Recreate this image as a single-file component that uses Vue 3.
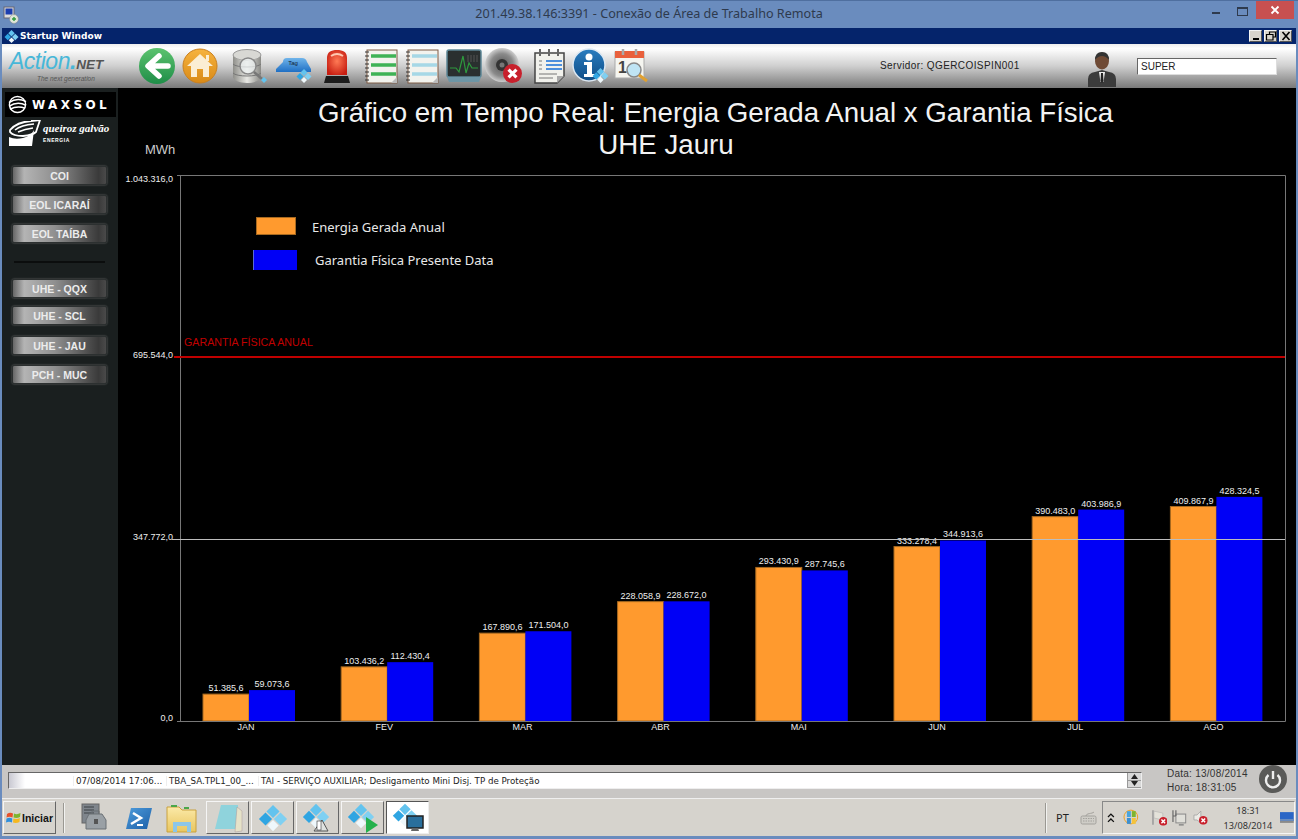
<script setup>
const MAX = 1043316
const BASE = 721
const HEIGHT = 546

const months = [
    { name: 'JAN', gerada: 51385.6, garantia: 59073.6, geradaText: '51.385,6', garantiaText: '59.073,6' },
    { name: 'FEV', gerada: 103436.2, garantia: 112430.4, geradaText: '103.436,2', garantiaText: '112.430,4' },
    { name: 'MAR', gerada: 167890.6, garantia: 171504.0, geradaText: '167.890,6', garantiaText: '171.504,0' },
    { name: 'ABR', gerada: 228058.9, garantia: 228672.0, geradaText: '228.058,9', garantiaText: '228.672,0' },
    { name: 'MAI', gerada: 293430.9, garantia: 287745.6, geradaText: '293.430,9', garantiaText: '287.745,6' },
    { name: 'JUN', gerada: 333278.4, garantia: 344913.6, geradaText: '333.278,4', garantiaText: '344.913,6' },
    { name: 'JUL', gerada: 390483.0, garantia: 403986.9, geradaText: '390.483,0', garantiaText: '403.986,9' },
    { name: 'AGO', gerada: 409867.9, garantia: 428324.5, geradaText: '409.867,9', garantiaText: '428.324,5' }
]

const scale = (v) => (v / MAX) * HEIGHT
const barX = (i) => 203 + i * 138.2

const yLabels = [
    { text: '1.043.316,0', y: 182 },
    { text: '695.544,0', y: 358 },
    { text: '347.772,0', y: 540 },
    { text: '0,0', y: 721 }
]

const sideTop = ['COI', 'EOL ICARAÍ', 'EOL TAÍBA']
const sideBottom = [
    { name: 'UHE - QQX', cls: '' },
    { name: 'UHE - SCL', cls: 'tight' },
    { name: 'UHE - JAU', cls: 'loose' },
    { name: 'PCH - MUC', cls: '' }
]
</script>

<template>
    <div class="desktop">
        <svg class="defs" width="0" height="0">
            <defs>
                <linearGradient id="gGreen" x1="0" y1="0" x2="0" y2="1"><stop offset="0" stop-color="#5cc36f" /><stop offset="1" stop-color="#1f8d48" /></linearGradient>
                <linearGradient id="gOrange" x1="0" y1="0" x2="0" y2="1"><stop offset="0" stop-color="#f6b33f" /><stop offset="1" stop-color="#d98a17" /></linearGradient>
                <linearGradient id="gMetal" x1="0" y1="0" x2="1" y2="0"><stop offset="0" stop-color="#8f8f8a" /><stop offset=".5" stop-color="#e8e8e4" /><stop offset="1" stop-color="#8a8a86" /></linearGradient>
                <linearGradient id="gTag" x1="0" y1="0" x2="0" y2="1"><stop offset="0" stop-color="#6fb4ea" /><stop offset="1" stop-color="#1f6fc4" /></linearGradient>
                <radialGradient id="gSiren" cx=".5" cy=".45" r=".6"><stop offset="0" stop-color="#ff7a55" /><stop offset="1" stop-color="#c81e12" /></radialGradient>
                <radialGradient id="gSpeaker" cx=".5" cy=".5" r=".55"><stop offset="0" stop-color="#555" /><stop offset=".6" stop-color="#8a8a8a" /><stop offset="1" stop-color="#e2e2e2" /></radialGradient>
                <linearGradient id="gInfo" x1="0" y1="0" x2="0" y2="1"><stop offset="0" stop-color="#2a7dbf" /><stop offset="1" stop-color="#0f4d86" /></linearGradient>
                <linearGradient id="gFolder" x1="0" y1="0" x2="0" y2="1"><stop offset="0" stop-color="#fbe9a8" /><stop offset="1" stop-color="#e9c65f" /></linearGradient>
                <linearGradient id="gPs" x1="0" y1="0" x2="1" y2="1"><stop offset="0" stop-color="#4f9cdb" /><stop offset="1" stop-color="#1b5fa8" /></linearGradient>
                <symbol id="diamond" viewBox="0 0 32 32">
                    <path d="M16 2 23 9 16 16 9 9Z" fill="#63c3ee" />
                    <path d="M8 10 15 17 8 24 1 17Z" fill="#2fa5e2" />
                    <path d="M24 10 31 17 24 24 17 17Z" fill="#7fd0f2" />
                    <path d="M16 18 22 24 16 30 10 24Z" fill="#eef7fb" />
                </symbol>
                <symbol id="badX" viewBox="0 0 12 12">
                    <circle cx="6" cy="6" r="6" fill="#c8202c" />
                    <path d="M3.5 3.5 8.5 8.5M8.5 3.5 3.5 8.5" stroke="#fff" stroke-width="2" />
                </symbol>
            </defs>
        </svg>

        <header class="rdp-bar">
            <svg class="rdp-icon" width="16" height="18" viewBox="0 0 16 18">
                <rect x="1" y="1" width="10" height="11" fill="#ddd" stroke="#667" />
                <rect x="2.5" y="2.5" width="7" height="6" fill="#1d3fb0" />
                <circle cx="11" cy="13" r="4.4" fill="#dfe6d8" stroke="#888" stroke-width=".5" />
                <path d="M9 13h4M11 11v4" stroke="#2f9a3d" stroke-width="1.4" />
            </svg>
            <span class="rdp-title">201.49.38.146:3391 - Conexão de Área de Trabalho Remota</span>
            <div class="rdp-controls">
                <span class="rdp-min"></span>
                <span class="rdp-max"></span>
                <span class="rdp-close">
                    <svg width="10" height="10" viewBox="0 0 10 10"><path d="M1.5 1.5 8.5 8.5M8.5 1.5 1.5 8.5" stroke="#fff" stroke-width="1.8" /></svg>
                </span>
            </div>
        </header>

        <div class="window">
            <div class="win-title">
                <svg width="15" height="15" viewBox="0 0 32 32"><use href="#diamond" /></svg>
                <span>Startup Window</span>
                <div class="win-controls">
                    <span class="win-btn"><svg width="12" height="10" viewBox="0 0 12 10"><rect x="3" y="7" width="6" height="2" fill="#000" /></svg></span>
                    <span class="win-btn"><svg width="12" height="10" viewBox="0 0 12 10"><path d="M4.500 3V1h6v5H8M1.500 3.500h6.500v5.500h-6.500z" fill="none" stroke="#000" stroke-width="1.200" /></svg></span>
                    <span class="win-btn"><svg width="12" height="10" viewBox="0 0 12 10"><path d="M2.500 1 9.500 9M9.500 1 2.500 9" stroke="#000" stroke-width="1.600" /></svg></span>
                </div>
            </div>

            <div class="toolbar">
                <div class="logo">
                    <div class="logo-main"><span class="logo-action">Action</span><span class="logo-dot">.</span><span class="logo-net">NET</span></div>
                    <div class="logo-sub">The next generation</div>
                </div>
                <div class="tools">
                    <svg class="tool" width="36" height="36" viewBox="0 0 36 36">
                        <circle cx="18" cy="18" r="18" fill="url(#gGreen)" />
                        <path d="M20 8 9 18 20 28M10 18H29" fill="none" stroke="#fff" stroke-width="5.500" stroke-linejoin="round" stroke-linecap="round" />
                    </svg>
                    <svg class="tool g7" width="36" height="36" viewBox="0 0 36 36">
                        <circle cx="18" cy="18" r="17" fill="url(#gOrange)" stroke="#c9801f" />
                        <path d="M24 7H27V13H24Z" fill="#fbeed4" />
                        <path d="M18 6 31 18H27V29H21V21H15V29H9V18H5Z" fill="#fbeed4" />
                    </svg>
                    <svg class="tool g12" width="36" height="36" viewBox="0 0 36 36">
                        <g transform="translate(2 0)">
                            <ellipse cx="15" cy="7" rx="14" ry="5.500" fill="#d8d8d4" stroke="#999" />
                            <path d="M1 7V29C1 32 8 35 15 35S29 32 29 29V7C29 10 22 12.500 15 12.500S1 10 1 7Z" fill="url(#gMetal)" />
                            <path d="M1 16C4 20 26 20 29 16M1 25C4 29 26 29 29 25" fill="none" stroke="#777" />
                            <circle cx="16" cy="18" r="8" fill="#eef2f2" fill-opacity=".75" stroke="#888" stroke-width="1.500" />
                            <path d="M22 24 30 31" stroke="#777" stroke-width="2.500" />
                            <path d="M32 29 35 32 32 35 29 32Z" fill="#63c3ee" />
                        </g>
                    </svg>
                    <svg class="tool g10" width="36" height="36" viewBox="0 0 36 36">
                        <path d="M7 14Q7 10 11 10H26Q30 10 31 14L35 21V24H0V21Z" fill="url(#gTag)" />
                        <text x="17" y="17" class="tag-text">Tag</text>
                        <svg x="20" y="20" width="16" height="16" viewBox="0 0 32 32"><use href="#diamond" /></svg>
                    </svg>
                    <svg class="tool g7" width="36" height="36" viewBox="0 0 36 36">
                        <path d="M8 27V10C8 4 12 2 18 2S28 4 28 10V27Z" fill="url(#gSiren)" />
                        <path d="M12 8Q18 4 24 8" fill="none" stroke="#ffc7b0" stroke-width="2" />
                        <path d="M7 28H29L31 35H5Z" fill="#1c1c1c" />
                    </svg>
                    <svg class="tool g9" width="36" height="36" viewBox="0 0 36 36">
                        <rect x="3" y="2" width="30" height="33" fill="#f3f3ee" stroke="#7d5a45" />
                        <path d="M7 8H32M7 17H32M7 26H32" stroke="#3fb356" stroke-width="3.500" />
                        <path d="M1 4h4M1 8h4M1 12h4M1 16h4M1 20h4M1 24h4M1 28h4M1 32h4" stroke="#333" />
                        <path d="M27 35 33 29V35Z" fill="#bbb" />
                    </svg>
                    <svg class="tool g5" width="36" height="36" viewBox="0 0 36 36">
                        <rect x="3" y="2" width="30" height="33" fill="#f3f3ee" stroke="#7d5a45" />
                        <path d="M7 8H32M7 17H32M7 26H32" stroke="#a6d8e6" stroke-width="3.500" />
                        <path d="M1 4h4M1 8h4M1 12h4M1 16h4M1 20h4M1 24h4M1 28h4M1 32h4" stroke="#333" />
                        <path d="M27 35 33 29V35Z" fill="#bbb" />
                    </svg>
                    <svg class="tool g5" width="36" height="36" viewBox="0 0 36 36">
                        <rect x="1" y="2" width="34" height="27" rx="2" fill="#2a2f2f" stroke="#5d8796" stroke-width="1.500" />
                        <path d="M1 29H35L33 34H3Z" fill="#6d95a5" />
                        <path d="M4 20H10L13 24 17 8 20 25 23 15 26 20H32" fill="none" stroke="#2e9a3e" stroke-width="1.200" />
                        <path d="M22 7V14M25 7V14M28 7V14M31 7V14" stroke="#555" />
                    </svg>
                    <svg class="tool g3" width="36" height="36" viewBox="0 0 36 36">
                        <circle cx="17" cy="17" r="17" fill="url(#gSpeaker)" />
                        <circle cx="17" cy="17" r="6" fill="#333" />
                        <circle cx="17" cy="17" r="2.500" fill="#777" />
                        <svg x="18" y="16" width="19" height="19" viewBox="0 0 12 12"><use href="#badX" /></svg>
                    </svg>
                    <svg class="tool g10" width="36" height="36" viewBox="0 0 36 36">
                        <path d="M4 5H33V28L26 35H4Z" fill="#f1f1ec" stroke="#444" stroke-width="1.500" />
                        <path d="M9 1V8M18 1V8M27 1V8" stroke="#666" stroke-width="2" />
                        <path d="M15 13H31M15 17H31M15 21H31" stroke="#4d8fdc" stroke-width="2" />
                        <path d="M8 13H11M8 17H11M8 21H11M8 26H26M8 30H22" stroke="#777" />
                        <path d="M26 35V28H33Z" fill="#aaa" />
                    </svg>
                    <svg class="tool g5" width="36" height="36" viewBox="0 0 36 36">
                        <circle cx="17" cy="17" r="16" fill="url(#gInfo)" stroke="#dde8f2" stroke-width="1.500" />
                        <circle cx="17" cy="9" r="3.500" fill="#fff" />
                        <path d="M12 14H20V26H23V29H12V26H15V17H12Z" fill="#fff" />
                        <svg x="20" y="19" width="17" height="17" viewBox="0 0 32 32"><use href="#diamond" /></svg>
                    </svg>
                    <svg class="tool g6" width="36" height="36" viewBox="0 0 36 36">
                        <rect x="1" y="4" width="29" height="26" fill="#f5f5f0" stroke="#aaa" />
                        <rect x="1" y="3" width="29" height="7" fill="#e9603c" />
                        <path d="M9 1V7M22 1V7" stroke="#aaa" stroke-width="2.500" />
                        <text x="4" y="25" class="cal-text">1</text>
                        <circle cx="20" cy="22" r="7" fill="#bfe4f4" stroke="#888" stroke-width="1.500" />
                        <path d="M25 27 33 33" stroke="#e0a030" stroke-width="3" />
                    </svg>
                </div>
                <span class="server">Servidor: QGERCOISPIN001</span>
                <svg class="user" width="28" height="35" viewBox="0 0 28 35">
                    <path d="M0 35V27Q0 21 7 20L14 18 21 20Q28 21 28 27V35Z" fill="#3b3b3b" />
                    <path d="M11 20H17L15.500 30H12.500Z" fill="#eee" />
                    <path d="M13 21H15L15.500 29 14 31 12.500 29Z" fill="#222" />
                    <ellipse cx="14" cy="9" rx="7" ry="8.500" fill="#6f4a35" />
                    <path d="M7 8Q7 0 14 0T21 8Q18 4 14 4T7 8Z" fill="#333" />
                </svg>
                <div class="user-box">SUPER</div>
            </div>

            <div class="main">
                <aside class="side">
                    <div class="waxsol">
                        <svg width="19" height="19" viewBox="0 0 20 20">
                            <circle cx="10" cy="10" r="8.500" fill="none" stroke="#fff" stroke-width="1.500" />
                            <path d="M1 8Q10 2 19 7M1 12Q10 6 19 11M2 15Q10 11 18 14" fill="none" stroke="#fff" stroke-width="1.600" />
                        </svg>
                        <span>WAXSOL</span>
                    </div>
                    <div class="queiroz">
                        <svg width="32" height="26" viewBox="0 0 32 26">
                            <path d="M0 26V17Q6 20 14 18T25 10L23 26Z" fill="#fff" />
                            <path d="M1 10Q8 2 22 1L31 0 27 12Q24 15 14 16 4 16 1 12Z" fill="none" stroke="#fff" stroke-width="1.800" />
                            <path d="M6 10Q12 5 25 4M9 12Q16 9 24 8" fill="none" stroke="#fff" stroke-width="1.600" />
                        </svg>
                        <div class="q-text">
                            <div class="q-name">queiroz galvão</div>
                            <div class="q-sub">ENERGIA</div>
                        </div>
                    </div>
                    <div class="side-list">
                        <button v-for="b in sideTop" :key="b" class="side-btn">{{ b }}</button>
                        <div class="side-divider"></div>
                        <button v-for="b in sideBottom" :key="b.name" class="side-btn" :class="b.cls">{{ b.name }}</button>
                    </div>
                </aside>

                <svg class="chart" width="1178" height="677" viewBox="118 88 1178 677">
                    <text x="715.500" y="122" class="title">Gráfico em Tempo Real: Energia Gerada Anual x Garantia Física</text>
                    <text x="666" y="154" class="title">UHE Jauru</text>
                    <text x="145" y="154" class="unit">MWh</text>

                    <text x="184" y="346" class="limit">GARANTIA FÍSICA ANUAL</text>

                    <text v-for="l in yLabels" :key="l.text" x="173" :y="l.y" class="axis end">{{ l.text }}</text>

                    <rect x="256.500" y="217.500" width="39" height="17" fill="#ff9a2e" stroke="#a86a20" />
                    <rect x="253" y="250" width="44" height="20" fill="#0000f6" />
                    <rect x="253" y="250" width="1" height="20" fill="#5a6ad8" />
                    <text x="312" y="232" class="legend">Energia Gerada Anual</text>
                    <text x="315" y="265" class="legend">Garantia Física Presente Data</text>

                    <g v-for="(m, i) in months" :key="m.name">
                        <rect :x="barX(i)" :y="BASE - scale(m.gerada)" width="46" :height="scale(m.gerada)" fill="#ff9a2e" stroke="#a86a20" />
                        <rect :x="barX(i) + 46" :y="BASE - scale(m.garantia)" width="46" :height="scale(m.garantia)" fill="#0000f6" />
                        <text :x="barX(i) + 23" :y="BASE - scale(m.gerada) - 3" class="axis mid">{{ m.geradaText }}</text>
                        <text :x="barX(i) + 69" :y="BASE - scale(m.garantia) - 3" class="axis mid">{{ m.garantiaText }}</text>
                        <text :x="barX(i) + 43" y="730" class="axis mid">{{ m.name }}</text>
                    </g>

                    <path d="M177 175.500H1285.500V721.500H177M180.500 175V721" fill="none" stroke="#777" />
                    <path d="M172 539.500H1285" stroke="#bdbdbd" />
                    <path d="M174 357H1285" stroke="#c00000" stroke-width="2" />
                </svg>
            </div>

            <div class="status">
                <div class="alarm-list">
                    <span class="cell-first"></span>
                    <span class="cell cell-date">07/08/2014 17:06...</span>
                    <span class="cell cell-tag">TBA_SA.TPL1_00_...</span>
                    <span class="cell">TAI - SERVIÇO AUXILIAR; Desligamento Mini Disj. TP de Proteção</span>
                    <div class="scroll">
                        <span class="scroll-btn"><svg width="9" height="5" viewBox="0 0 9 5"><path d="M4.500 0 8 5H1Z" fill="#222" /></svg></span>
                        <span class="scroll-btn"><svg width="9" height="5" viewBox="0 0 9 5"><path d="M1 0H8L4.500 5Z" fill="#222" /></svg></span>
                    </div>
                </div>
                <div class="clock-block">
                    <div>Data: 13/08/2014</div>
                    <div>Hora: 18:31:05</div>
                </div>
                <svg class="power" width="28" height="28" viewBox="0 0 28 28">
                    <circle cx="14" cy="14" r="14" fill="#5a5a58" />
                    <path d="M9.500 10A7 7 0 1 0 18.500 10" fill="none" stroke="#eee" stroke-width="2.400" />
                    <path d="M14 6V14" stroke="#eee" stroke-width="2.400" />
                </svg>
            </div>

            <div class="taskbar">
                <button class="start">
                    <svg width="15" height="14" viewBox="0 0 15 14">
                        <path d="M1 3Q4 1 7 2.500L6.500 6.500Q3.500 5 .5 6.500Z" fill="#e8502a" />
                        <path d="M8 2.500Q11 4 14.500 2L14 6Q11 7.500 7.500 6.500Z" fill="#7fb52c" />
                        <path d="M.5 7.500Q3.500 6 6.300 7.500L6 11.500Q3 10 0 11.500Z" fill="#2f8fdc" />
                        <path d="M7.400 7.500Q11 8.500 13.800 7L13.500 11Q10 12.500 7 11.500Z" fill="#f5b81f" />
                    </svg>
                    <span>Iniciar</span>
                </button>
                <span class="task-sep"></span>
                <svg class="task-icon first" width="36" height="34" viewBox="0 0 36 34">
                    <rect x="8" y="3" width="17" height="19" fill="#7f858c" stroke="#666" />
                    <path d="M10 6H20M10 9H20M10 12H20" stroke="#3c4044" />
                    <path d="M15 13H28L32 19V28H12V19Z" fill="#9aa0a5" stroke="#6b7075" />
                    <path d="M18 13V10H25V13" fill="none" stroke="#6b7075" />
                    <rect x="20" y="18" width="4" height="5" fill="#555" />
                </svg>
                <svg class="task-icon ps" width="36" height="34" viewBox="0 0 36 34">
                    <path d="M10 7H31L26 28H5Z" fill="url(#gPs)" />
                    <path d="M12 12 20 17 10 23" fill="none" stroke="#fff" stroke-width="2.500" />
                    <path d="M16 24H22" stroke="#fff" stroke-width="2" />
                </svg>
                <svg class="task-icon folder" width="36" height="34" viewBox="0 0 36 34">
                    <path d="M2 6H14L17 9H31V31H2Z" fill="url(#gFolder)" stroke="#c9a13e" />
                    <path d="M6 5H12M19 7H24" stroke="#4aa64a" stroke-width="2" />
                    <path d="M8 21H26V31H22V25H12V31H8Z" fill="#8cc6e8" />
                </svg>
                <span class="task-btn first-btn">
                    <svg width="30" height="30" viewBox="0 0 30 30">
                        <path d="M8 2H25V26H2Z" fill="#8fd3dc" />
                        <path d="M24 4 29 8V28L22 29Z" fill="#e6e2c8" stroke="#a99" stroke-width=".5" />
                    </svg>
                </span>
                <span class="task-btn">
                    <svg width="30" height="30"><use href="#diamond" /></svg>
                </span>
                <span class="task-btn">
                    <svg width="32" height="32" viewBox="0 0 32 32">
                        <use href="#diamond" width="28" height="28" />
                        <path d="M12 29 20 18 26 29Z" fill="#dfe2e0" stroke="#555" />
                        <rect x="15" y="19" width="4" height="9" fill="#fff" stroke="#333" stroke-width=".6" />
                    </svg>
                </span>
                <span class="task-btn">
                    <svg width="32" height="32" viewBox="0 0 32 32">
                        <use href="#diamond" width="28" height="28" />
                        <path d="M19 15 31 23 19 31Z" fill="#25b14b" />
                    </svg>
                </span>
                <span class="task-btn active">
                    <svg width="32" height="32" viewBox="0 0 32 32">
                        <use href="#diamond" width="26" height="26" />
                        <rect x="15" y="14" width="16" height="12" fill="#2a6f9c" stroke="#222" stroke-width="1.500" />
                        <path d="M20 26H26L27 29H19Z" fill="#666" />
                    </svg>
                </span>

                <div class="task-right">
                    <span class="task-sep"></span>
                    <span class="lang">PT</span>
                    <svg class="kbd" width="17" height="14" viewBox="0 0 17 14">
                        <rect x="1" y="5" width="15" height="8" rx="1.500" fill="#cfcdc7" stroke="#a3a19c" />
                        <path d="M3 7.500H14M3 10H14" stroke="#a3a19c" stroke-dasharray="1.500 1" />
                        <path d="M6 5C6 2 12 3 14 1" fill="none" stroke="#a3a19c" />
                    </svg>
                    <div class="tray">
                        <svg width="8" height="10" viewBox="0 0 8 10"><path d="M1 4 4 1 7 4M1 9 4 6 7 9" fill="none" stroke="#111" stroke-width="1.300" /></svg>
                        <svg class="tray-flag" width="17" height="17" viewBox="0 0 17 17">
                            <circle cx="8" cy="8" r="7" fill="none" stroke="#f0a020" />
                            <rect x="4" y="2" width="4" height="6" fill="#4aa4dc" />
                            <rect x="9" y="2" width="4" height="6" fill="#7fb52c" />
                            <rect x="4" y="9" width="4" height="6" fill="#3d8fd0" />
                            <rect x="9" y="9" width="4" height="6" fill="#f5c33a" />
                        </svg>
                        <svg class="tray-ic flagx" width="16" height="17" viewBox="0 0 16 17">
                            <path d="M1 1V16" stroke="#999" stroke-width="1.500" />
                            <path d="M2 2 11 4V11L2 9Z" fill="#e4e2da" stroke="#aaa" stroke-width=".5" />
                            <use href="#badX" x="7" y="8" width="9" height="9" />
                        </svg>
                        <svg class="tray-ic net" width="16" height="17" viewBox="0 0 16 17">
                            <rect x="5" y="5" width="10" height="9" fill="#e0dfd9" stroke="#888" />
                            <path d="M2 1V13M5 1V7M2 7H5" stroke="#666" stroke-width="1.200" fill="none" />
                            <path d="M8 16H13" stroke="#888" stroke-width="1.500" />
                        </svg>
                        <svg class="tray-ic spk" width="15" height="17" viewBox="0 0 15 17">
                            <path d="M1 6H4L8 2V14L4 11H1Z" fill="#ecebe6" stroke="#999" stroke-width=".7" />
                            <use href="#badX" x="6" y="7" width="9" height="9" />
                        </svg>
                        <div class="tray-clock">
                            <div>18:31</div>
                            <div>13/08/2014</div>
                        </div>
                        <svg width="14" height="12" viewBox="0 0 14 12">
                            <rect width="14" height="9" fill="#2b66c6" />
                            <rect y="7" width="14" height="2" fill="#6a8cbe" />
                            <rect y="9" width="14" height="2" fill="#8a8a8a" />
                        </svg>
                    </div>
                </div>
            </div>
        </div>
    </div>
</template>

<style>
html, body {
    margin: 0;
    background: #6a8cbe;
}
</style>

<style scoped>
.desktop {
    width: 1298px;
    height: 839px;
    overflow: hidden;
    background: #6a8cbe;
    display: flex;
    flex-direction: column;
    box-sizing: border-box;
    padding-bottom: 3px;
    font-family: "Liberation Sans", sans-serif;
}

.defs {
    position: absolute;
}

.rdp-bar {
    height: 28px;
    flex: none;
    display: grid;
    grid-template-columns: 1fr auto 1fr;
    border-top: 1px solid #4f6f9f;
    box-sizing: border-box;
}

.rdp-icon {
    margin: 5px 0 0 3px;
}

.rdp-title {
    font-family: "Noto Sans", sans-serif;
    font-size: 12.600px;
    line-height: 26px;
    color: #2e3a4d;
}

.rdp-controls {
    display: flex;
    justify-content: flex-end;
    align-items: flex-start;
    padding-right: 4px;
}

.rdp-min {
    width: 8px;
    height: 2px;
    background: #2e3a4d;
    margin: 11px 17px 0 0;
}

.rdp-max {
    width: 9px;
    height: 6px;
    border: 1px solid #2e3a4d;
    border-top-width: 2px;
    margin: 6px 8px 0 0;
}

.rdp-close {
    width: 38px;
    height: 18px;
    background: #c75050;
    display: grid;
    place-items: center;
}

.window {
    flex: 1;
    margin: 0 2px;
    display: flex;
    flex-direction: column;
    min-height: 0;
}

.win-title {
    height: 16px;
    flex: none;
    background: #05246b;
    color: #fff;
    font-family: "DejaVu Sans", sans-serif;
    font-size: 9px;
    font-weight: 700;
    display: flex;
    align-items: center;
    gap: 1px;
    padding-left: 2px;
}

.win-controls {
    margin-left: auto;
    display: flex;
    gap: 2px;
    padding-right: 4px;
}

.win-btn {
    width: 13px;
    height: 12px;
    background: #d8d4cc;
    border: 1px solid;
    border-color: #f4f4f4 #555 #555 #f4f4f4;
    box-sizing: border-box;
    display: grid;
    place-items: center;
}

.toolbar {
    height: 44px;
    flex: none;
    background: linear-gradient(#eeeeee, #ffffff 10%, #cfcfcf 50%, #797979);
    display: flex;
    align-items: center;
}

.logo {
    width: 134px;
    flex: none;
    padding: 2px 0 0 7px;
    box-sizing: border-box;
}

.logo-main {
    font-style: italic;
    line-height: 21px;
    white-space: nowrap;
}

.logo-action {
    font-size: 23px;
    color: #47b7d8;
    letter-spacing: -.5px;
}

.logo-dot {
    font-size: 23px;
    font-weight: 700;
    color: #47b7d8;
}

.logo-net {
    font-size: 13.500px;
    font-weight: 700;
    color: #555;
}

.logo-sub {
    font-size: 6.500px;
    font-style: italic;
    color: #555;
    padding-left: 28px;
    line-height: 8px;
}

.tools {
    display: flex;
    align-items: center;
    margin-left: 3px;
    width: 740px;
    flex: none;
}

.tool {
    flex: none;
    overflow: visible;
}

.g3 { margin-left: 3px; }
.g5 { margin-left: 5px; }
.g6 { margin-left: 6px; }
.g7 { margin-left: 7px; }
.g9 { margin-left: 9px; }
.g10 { margin-left: 10px; }
.g12 { margin-left: 12px; }

.tag-text {
    font-size: 6px;
    text-anchor: middle;
    fill: #123;
}

.cal-text {
    font-size: 16px;
    font-weight: 700;
    fill: #444;
}

.server {
    font-size: 10px;
    color: #222;
    letter-spacing: .4px;
    white-space: nowrap;
    width: 209px;
    flex: none;
    margin-bottom: 1px;
    padding-left: 1px;
    box-sizing: border-box;
}

.user {
    flex: none;
    align-self: flex-end;
    margin-bottom: 1px;
}

.user-box {
    margin-left: 21px;
    width: 140px;
    height: 17px;
    flex: none;
    box-sizing: border-box;
    background: #fff;
    border: 1px solid;
    border-color: #666 #ddd #ddd #666;
    font-size: 10px;
    line-height: 15px;
    padding-left: 3px;
    color: #222;
}

.main {
    height: 677px;
    flex: none;
    display: flex;
    background: #000;
}

.side {
    width: 116px;
    flex: none;
    background: #1a1f1f;
    display: flex;
    flex-direction: column;
}

.waxsol {
    margin: 4px 2px 0 3px;
    height: 25px;
    background: #000;
    display: flex;
    align-items: center;
    gap: 5px;
    padding-left: 3px;
    color: #fff;
    font-family: "DejaVu Sans", sans-serif;
    font-size: 12px;
    font-weight: 700;
    letter-spacing: 3.400px;
}

.queiroz {
    margin: 3px 0 0 7px;
    height: 26px;
    display: flex;
    gap: 2px;
    color: #fff;
}

.q-name {
    font-family: "Liberation Serif", serif;
    font-size: 11px;
    font-style: italic;
    font-weight: 700;
    margin-top: 2px;
    white-space: nowrap;
}

.q-sub {
    font-size: 5px;
    font-weight: 700;
    letter-spacing: .6px;
    margin-top: 3px;
}

.side-list {
    display: flex;
    flex-direction: column;
    gap: 10px;
    margin: 20px 0 0 10px;
    width: 95px;
}

.side-btn {
    height: 19px;
    padding: 0;
    border: 1px solid #2c3030;
    border-radius: 2px;
    background: linear-gradient(90deg, #666, #b4b4b4 12%, #8f8f8f 45%, #3a3a3a 92%, #4a4a4a);
    box-shadow: 0 0 2px #777;
    color: #ececec;
    font-family: "Liberation Sans", sans-serif;
    font-size: 10.500px;
    font-weight: 700;
}

.side-divider {
    height: 2px;
    margin: 8px 2px 6px;
    background: #0b0d0d;
}

.tight {
    margin-top: -2px;
}

.loose {
    margin-top: 1px;
}

.chart {
    flex: none;
    display: block;
}

.title {
    font-size: 27.700px;
    fill: #f2f2f2;
    text-anchor: middle;
}

.unit {
    font-size: 13px;
    fill: #ccc;
}

.limit {
    font-size: 10.700px;
    fill: #c00000;
}

.axis {
    font-size: 9px;
    fill: #eee;
}

.end {
    text-anchor: end;
}

.mid {
    text-anchor: middle;
}

.legend {
    font-family: "Noto Sans", sans-serif;
    font-size: 13px;
    fill: #e8e8e8;
}

.status {
    height: 33px;
    flex: none;
    background: #c8c6c4;
    display: flex;
    align-items: flex-start;
    box-sizing: border-box;
    padding: 7px 0 0 6px;
}

.alarm-list {
    width: 1134px;
    height: 17px;
    flex: none;
    box-sizing: border-box;
    background: #fff;
    border: 1px solid;
    border-color: #666 #eee #eee #666;
    display: flex;
    align-items: center;
    font-family: "DejaVu Sans", sans-serif;
    font-size: 8.700px;
    color: #222;
    white-space: nowrap;
}

.cell-first {
    width: 16px;
    height: 100%;
    background: linear-gradient(90deg, #c9c9d2, #fff);
    margin-right: 48px;
}

.cell {
    padding-left: 2px;
    border-left: 1px solid #eee;
}

.cell-date {
    width: 90px;
    flex: none;
}

.cell-tag {
    width: 89px;
    flex: none;
}

.scroll {
    margin-left: auto;
    width: 13px;
    height: 15px;
    display: flex;
    flex-direction: column;
    border-left: 1px solid #999;
    background: #d8d8d8;
}

.scroll-btn {
    flex: 1;
    display: grid;
    place-items: center;
    border-bottom: 1px solid #999;
}

.clock-block {
    margin: -5px 0 0 25px;
    width: 92px;
    flex: none;
    font-size: 10px;
    line-height: 14px;
    letter-spacing: .25px;
    color: #333;
}

.power {
    flex: none;
    margin-top: -7px;
}

.taskbar {
    height: 38px;
    flex: none;
    background: #d6d3cd;
    border-top: 1px solid #efefef;
    box-sizing: border-box;
    display: flex;
    align-items: center;
    padding-left: 1px;
}

.start {
    width: 53px;
    height: 33px;
    padding: 0;
    flex: none;
    background: #d6d3cd;
    border: 1px solid;
    border-color: #f5f5f5 #666 #666 #f5f5f5;
    display: flex;
    align-items: center;
    justify-content: center;
    gap: 1px;
    font-family: "Liberation Sans", sans-serif;
    font-size: 10.500px;
    font-weight: 700;
    color: #111;
}

.task-sep {
    width: 2px;
    height: 30px;
    margin-left: 7px;
    flex: none;
    background: #f2f2f0;
    border-left: 1px solid #9a9892;
    box-sizing: border-box;
}

.task-icon {
    flex: none;
}

.first {
    margin-left: 9px;
}

.ps {
    margin-left: 11px;
}

.folder {
    margin-left: 8px;
}

.task-btn {
    width: 43px;
    height: 33px;
    margin-left: 2px;
    flex: none;
    box-sizing: border-box;
    border: 1px solid;
    border-color: #f5f5f5 #666 #666 #f5f5f5;
    display: grid;
    place-items: center;
}

.first-btn {
    margin-left: 5px;
}

.active {
    background: #fff;
    border-color: #555 #eee #eee #555;
}

.task-right {
    margin-left: auto;
    display: flex;
    align-items: center;
    padding-right: 1px;
}

.lang {
    margin-left: 9px;
    font-family: "Noto Sans", sans-serif;
    font-size: 11px;
    color: #222;
    width: 24px;
}

.kbd {
    margin-right: 5px;
}

.tray {
    width: 193px;
    height: 33px;
    box-sizing: border-box;
    border: 1px solid;
    border-color: #888 #f5f5f5 #f5f5f5 #888;
    display: flex;
    align-items: center;
    padding-left: 4px;
}

.tray-flag {
    margin-left: 8px;
}

.tray-ic {
    margin-left: 12px;
}

.net {
    margin-left: 4px;
}

.spk {
    margin-left: 6px;
}

.tray-clock {
    width: 66px;
    text-align: center;
    font-family: "Noto Sans", sans-serif;
    font-size: 9.200px;
    line-height: 15px;
    color: #333;
    margin-left: 8px;
}
</style>
